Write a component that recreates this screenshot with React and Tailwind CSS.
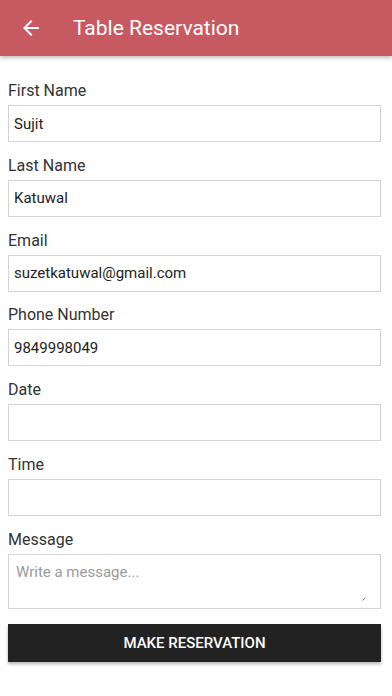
import React from "react";

const fields = [
  { label: "First Name", value: "Sujit" },
  { label: "Last Name", value: "Katuwal" },
  { label: "Email", value: "suzetkatuwal@gmail.com" },
  { label: "Phone Number", value: "9849998049" },
  { label: "Date", value: "" },
  { label: "Time", value: "" },
];

export default function App() {
  return (
    <div className="min-h-[696px] w-[392px] bg-white font-['Roboto',sans-serif]">
      <header className="flex h-[56px] items-center bg-[#c65a60] pl-[19px] shadow-[0_2px_4px_rgba(0,0,0,0.25)]">
        <svg width="24" height="24" viewBox="0 0 24 24" fill="#ffffff">
          <path d="M20 11H7.83l5.59-5.59L12 4l-8 8 8 8 1.41-1.41L7.83 13H20v-2z" />
        </svg>
        <h1 className="ml-[30px] text-[21px] leading-none text-white">Table Reservation</h1>
      </header>
      <form className="flex flex-col pl-[8px] pr-[11px] pt-[25px]">
        {fields.map((f) => (
          <div key={f.label} className="mb-[13.8px] flex flex-col">
            <label className="mb-[4px] text-[16px] leading-[20px] text-[#333333]">{f.label}</label>
            <input
              readOnly
              value={f.value}
              className="h-[37px] w-full border border-[#d3d3d3] bg-white px-[5px] text-[15px] text-[#222222] outline-none"
            />
          </div>
        ))}
        <div className="flex flex-col">
          <label className="mb-[4px] text-[16px] leading-[20px] text-[#333333]">Message</label>
          <div className="relative">
            <textarea
              placeholder="Write a message..."
              className="block h-[55px] w-full resize-none border border-[#d3d3d3] bg-white px-[7px] py-[7px] text-[15px] leading-[20px] text-[#222222] outline-none placeholder:text-[#9a9a9a]"
            />
            <svg
              className="pointer-events-none absolute bottom-[8px] right-[15px]"
              width="4"
              height="4"
              viewBox="0 0 4 4"
            >
              <path d="M0.5 3.5L3.5 0.5" stroke="#777777" strokeWidth="1" />
            </svg>
          </div>
        </div>
        <button
          type="button"
          className="mt-[15px] h-[38px] w-full bg-[#222222] text-[15px] font-medium text-white shadow-[0_2px_3px_rgba(0,0,0,0.3)]"
        >
          MAKE RESERVATION
        </button>
      </form>
    </div>
  );
}
